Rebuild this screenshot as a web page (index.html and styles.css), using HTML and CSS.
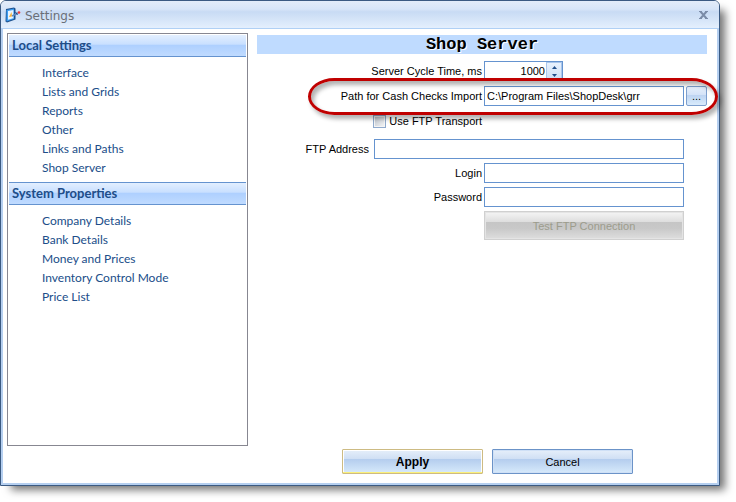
FILE: index.html
```html
<!DOCTYPE html>
<html lang="en">
<head>
<meta charset="utf-8">
<title>Settings</title>
<link rel="stylesheet" href="styles.css">
</head>
<body>
<div class="window">
  <header class="titlebar">
    <svg class="app-icon" width="16" height="16" viewBox="0 0 16 16" aria-hidden="true">
      <path d="M1 2 L9 0.5 L10.5 1.5 V12.5 L2 15.5 L0.5 14.5 Z" fill="#1c4f8c"/>
      <path d="M1.5 3 L9 1.6 V12 L1.5 14.4 Z" fill="#3d9cf0"/>
      <path d="M3 4 L8.4 3 V11.2 L3 12.8 Z" fill="#e6f3ff"/>
      <path d="M4 10 L6.5 5 L7 9.5 Z" fill="#f5b13a"/>
      <path d="M7 9 L13 6" stroke="#5f88bd" stroke-width="1.4"/>
      <path d="M10.5 5 L12.5 8" stroke="#1c4f8c" stroke-width="1"/>
      <circle cx="14" cy="5.5" r="1.3" fill="#ee3b3b"/>
    </svg>
    <h1 class="title">Settings</h1>
    <button class="close" type="button" aria-label="Close">
      <svg width="9" height="8" viewBox="0 0 9 8" aria-hidden="true">
        <path d="M1.5 0.5 L7.5 7.5 M7.5 0.5 L1.5 7.5" stroke="#7b8ca8" stroke-width="2"/>
        <path d="M0 0.5 H3 M6 0.5 H9 M0 7.5 H3 M6 7.5 H9" stroke="#7b8ca8"/>
      </svg>
    </button>
  </header>
  <div class="content">
    <nav class="sidebar">
      <h2 class="group">Local Settings</h2>
      <ul class="links">
        <li><a href="#">Interface</a></li>
        <li><a href="#">Lists and Grids</a></li>
        <li><a href="#">Reports</a></li>
        <li><a href="#">Other</a></li>
        <li><a href="#">Links and Paths</a></li>
        <li><a href="#">Shop Server</a></li>
      </ul>
      <h2 class="group group-next">System Properties</h2>
      <ul class="links">
        <li><a href="#">Company Details</a></li>
        <li><a href="#">Bank Details</a></li>
        <li><a href="#">Money and Prices</a></li>
        <li><a href="#">Inventory Control Mode</a></li>
        <li><a href="#">Price List</a></li>
      </ul>
    </nav>
    <form class="panel">
      <h2 class="panel-title">Shop Server</h2>
      <div class="row">
        <label for="cycle">Server Cycle Time, ms</label>
        <div class="spin">
          <input id="cycle" type="text" value="1000">
          <div class="spin-buttons">
            <button type="button" aria-label="Increase"><svg width="5" height="3" viewBox="0 0 5 3"><path d="M0 3 L2.5 0 L5 3 Z" fill="#204d89"/></svg></button>
            <button type="button" aria-label="Decrease"><svg width="5" height="3" viewBox="0 0 5 3"><path d="M0 0 L2.5 3 L5 0 Z" fill="#204d89"/></svg></button>
          </div>
        </div>
      </div>
      <div class="row row-path">
        <label for="path">Path for Cash Checks Import</label>
        <input id="path" class="field" type="text" value="C:\Program Files\ShopDesk\grr">
        <button class="browse" type="button">...</button>
        <span class="ring"></span>
      </div>
      <div class="row row-check">
        <label class="check" for="ftp"><input id="ftp" type="checkbox">Use FTP Transport</label>
      </div>
      <div class="row row-address">
        <label for="address">FTP Address</label>
        <input id="address" class="field" type="text">
      </div>
      <div class="row">
        <label for="login">Login</label>
        <input id="login" class="field" type="text">
      </div>
      <div class="row">
        <label for="password">Password</label>
        <input id="password" class="field" type="password">
      </div>
      <div class="row">
        <button class="test" type="button" disabled>Test FTP Connection</button>
      </div>
      <div class="actions">
        <button class="action apply" type="submit">Apply</button>
        <button class="action" type="button">Cancel</button>
      </div>
    </form>
  </div>
</div>
</body>
</html>
```
FILE: styles.css
```css
* {
  box-sizing: border-box;
}

body {
  display: flex;
  min-height: 100vh;
  margin: 0;
  padding: 0 16px 16px 0;
  background: #fff;
  color: #000;
  font: 11px/14px "Liberation Sans", Arial, sans-serif;
}

button,
input {
  margin: 0;
  padding: 0;
  font: inherit;
  color: inherit;
}

h1,
h2,
ul {
  margin: 0;
  padding: 0;
}

.window {
  flex: 1;
  display: flex;
  flex-direction: column;
  border: 1px solid #3b5a82;
  border-radius: 6px 6px 0 0;
  background: #fff;
  box-shadow: 8px 7px 8px -3px rgba(0, 0, 0, 0.55);
}

.titlebar {
  display: flex;
  align-items: center;
  height: 28px;
  padding: 3px 11px 0 4px;
  border-bottom: 1px solid #b0d0f5;
  border-radius: 5px 5px 0 0;
  background: linear-gradient(#e3ecf9, #d7e5f8 30%, #c8dbf4 40%, #e4effd);
}

.app-icon {
  margin: 0 4px 2px 0;
}

.title {
  flex: 1;
  color: #6a6f78;
  font: 12px/16px "DejaVu Sans", sans-serif;
}

.close {
  display: flex;
  margin-bottom: 2px;
  border: 0;
  background: none;
}

.content {
  flex: 1;
  display: flex;
  gap: 9px;
  padding: 4px 10px 8px 4px;
  border: solid #b5cff0;
  border-width: 0 2px 2px;
}

.sidebar {
  flex: none;
  width: 241px;
  margin-bottom: 29px;
  padding: 1px;
  border: 1px solid #878791;
}

.group {
  height: 22px;
  padding-left: 3px;
  border-bottom: 1px solid #6593cf;
  background: linear-gradient(#e3efff, #c8dfff 45%, #adcfff 46%, #c0dbff);
  color: #204d89;
  font: bold 13px/21px Lato, "Open Sans", sans-serif;
}

.group-next {
  height: 23px;
  border-top: 1px solid #6593cf;
}

.links {
  padding: 6px 0 5px 33px;
  list-style: none;
  font: 12px/19px Lato, "Open Sans", sans-serif;
}

.links a {
  color: #204d89;
  text-decoration: none;
}

.panel {
  flex: 1;
  display: flex;
  flex-direction: column;
  gap: 4px;
  min-width: 0;
  padding-top: 2px;
}

.panel-title {
  height: 19px;
  margin-bottom: 3px;
  background: #bfdbff;
  font: bold 17px/19px "Liberation Mono", monospace;
  text-align: center;
  text-shadow: 1px 1px 0 #fff;
}

.row {
  display: grid;
  grid-template-columns: minmax(0, 1fr) 200px 21px;
  gap: 2px;
  align-items: center;
}

.row label {
  justify-self: end;
}

.field,
.spin {
  height: 20px;
  border: 1px solid #6593cf;
  background: #fff;
}

.field {
  min-width: 0;
  padding: 0 2px;
}

.spin {
  display: flex;
  width: 79px;
}

.spin input {
  flex: 1;
  min-width: 0;
  border: 0;
  text-align: right;
}

.spin-buttons {
  display: flex;
  flex-direction: column;
  width: 16px;
  margin-left: 1px;
  border: 1px solid #a9c6ec;
  background: linear-gradient(#e8f1fd, #cddff7);
}

.spin-buttons button {
  flex: 1;
  display: flex;
  align-items: center;
  justify-content: center;
  border: 0;
  background: none;
}

.row-path {
  position: relative;
  margin-top: 1px;
}

.browse {
  height: 20px;
  border: 1px solid #7d9fce;
  border-radius: 2px;
  background: linear-gradient(#e6effc, #d3e2f7 45%, #bdd4f2 46%, #d9ebfc);
}

.ring {
  position: absolute;
  inset: -8px -11px -9px 51px;
  border: 3px solid #c00000;
  border-radius: 27px / 19px;
  box-shadow: 3px 4px 4px rgba(0, 0, 0, 0.3), inset 3px 4px 4px rgba(0, 0, 0, 0.3);
  pointer-events: none;
}

.row-check {
  min-height: 20px;
  margin: 1px 0 4px;
}

.check {
  display: flex;
  align-items: center;
  gap: 3px;
}

.check input {
  appearance: none;
  width: 13px;
  height: 13px;
  border: 1px solid #8fa9cc;
  background: linear-gradient(135deg, #b9c0ca, #f6f6f6);
  box-shadow: inset 0 0 0 1px #f4f4f4;
}

.row-address {
  display: flex;
  justify-content: flex-end;
  gap: 5px;
  padding-right: 23px;
}

.row-address .field {
  width: 310px;
}

.test {
  grid-column: 2;
  height: 29px;
  border: 1px solid #d0d0d0;
  background: linear-gradient(#f5f5f5, #dedede 36%, #c5c5c5 37%, #c8c8c8 60%, #dedede);
  box-shadow: inset 0 0 0 1px #e4e4e4;
  color: #9c9c8c;
}

.actions {
  display: flex;
  gap: 9px;
  margin-top: auto;
  margin-bottom: 1px;
  padding-left: 85px;
}

.action {
  width: 141px;
  height: 25px;
  border: 1px solid #6b93c8;
  border-radius: 1px;
  background: linear-gradient(#e6effa, #cfdff4 39%, #b4cdee 40%, #d7eafb);
  box-shadow: inset 0 0 0 1px #cfe0f6;
}

.apply {
  border-color: #cdbb83;
  box-shadow: inset 0 -1px 0 #fbf07a, inset 0 0 0 1px #fff;
  font-weight: bold;
  font-size: 12px;
}
```
